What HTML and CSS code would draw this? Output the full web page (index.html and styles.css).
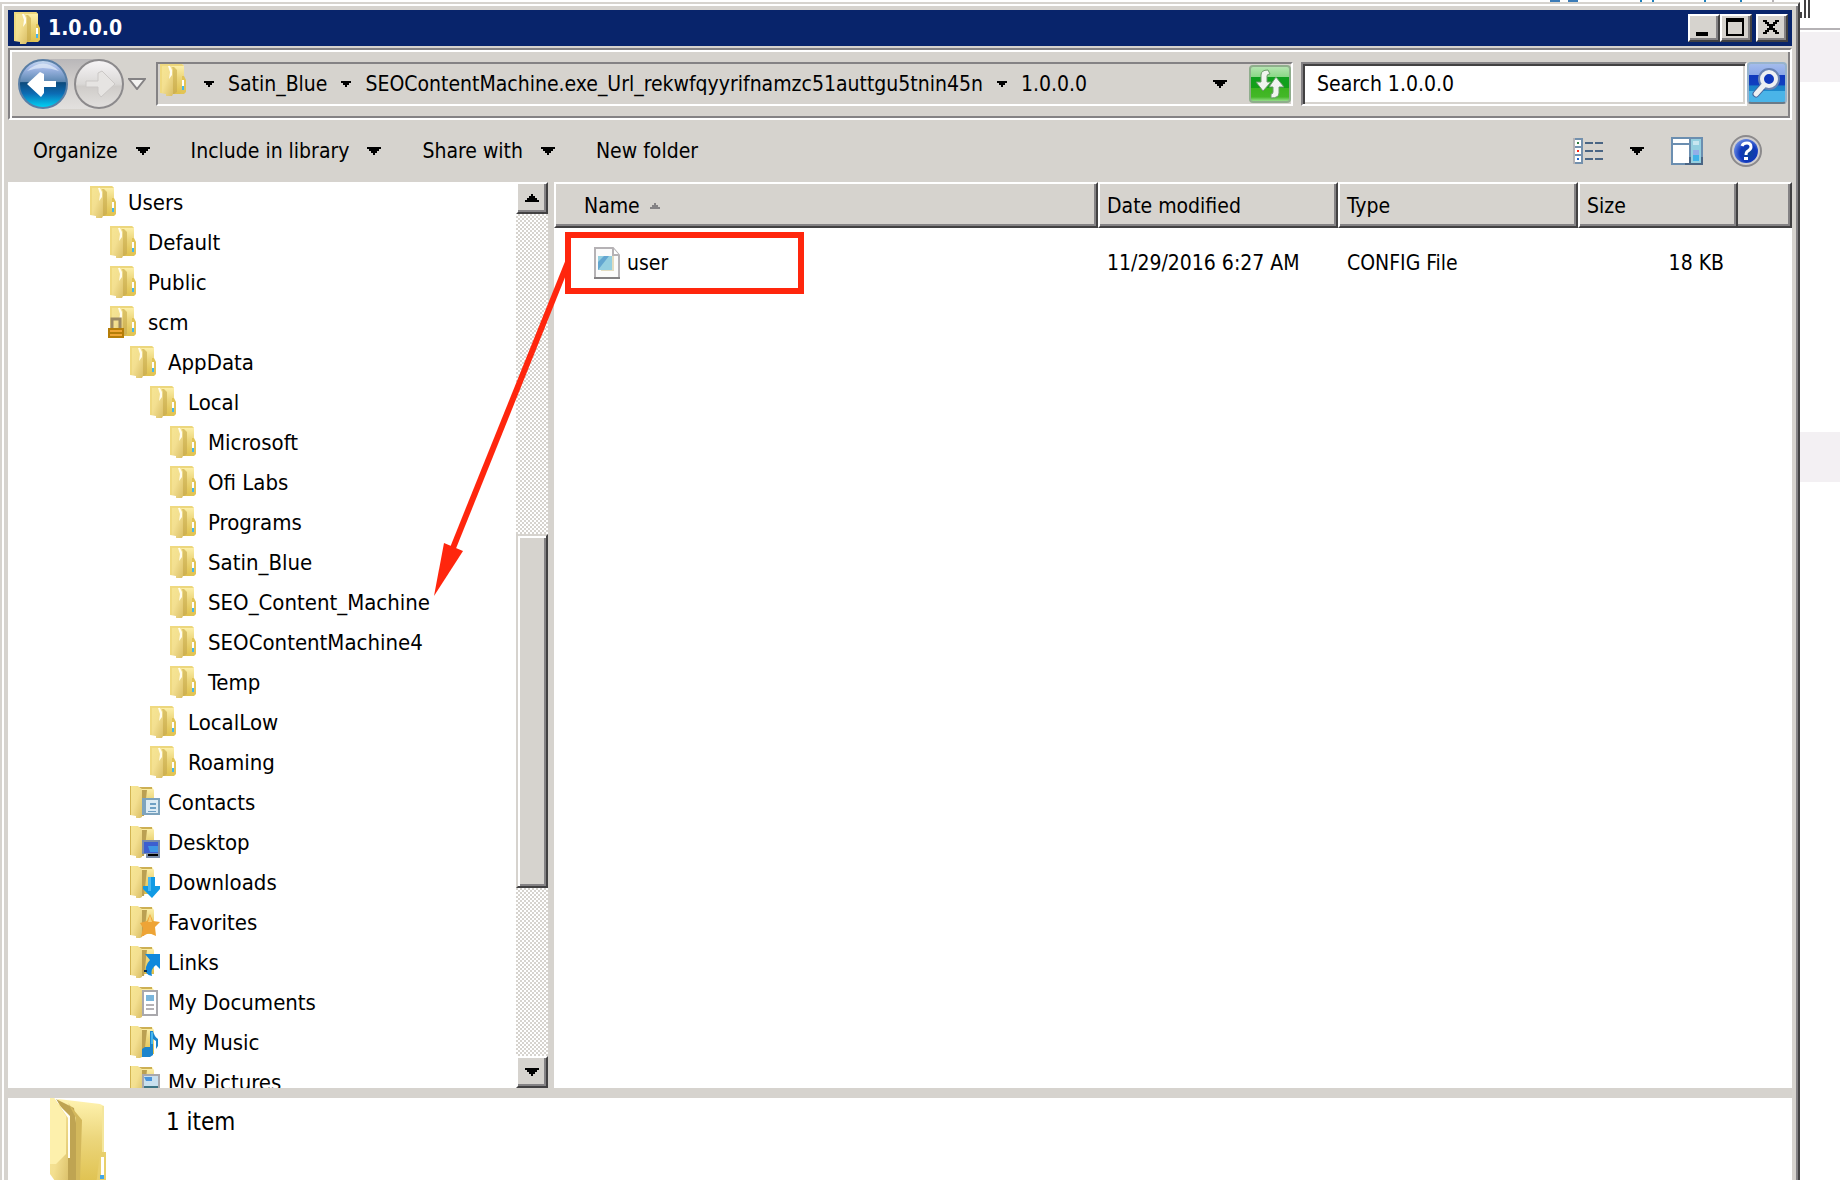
FILE: index.html
```
<!DOCTYPE html>
<html lang="en">
<head>
    <meta charset="UTF-8">
    <title>1.0.0.0</title>
    <link rel="stylesheet" href="styles.css">
</head>
<body>
    <!-- shared icon shapes -->
    <svg class="defs" width="0" height="0" aria-hidden="true">
        <defs>
            <linearGradient id="g-front" x1="0" y1="0" x2="1" y2="1">
                <stop offset="0" stop-color="#f7e794"/>
                <stop offset=".5" stop-color="#f3df90"/>
                <stop offset="1" stop-color="#d9be66"/>
            </linearGradient>
            <linearGradient id="g-back" x1="0" y1="0" x2="0" y2="1">
                <stop offset="0" stop-color="#fff3b0"/>
                <stop offset=".45" stop-color="#ecd67c"/>
                <stop offset="1" stop-color="#dec04c"/>
            </linearGradient>
            <linearGradient id="g-fold" x1="0" y1="0" x2="0" y2="1">
                <stop offset="0" stop-color="#dcc468"/>
                <stop offset="1" stop-color="#ceb050"/>
            </linearGradient>
            <linearGradient id="g-blue" x1="0" y1="0" x2="0" y2="1">
                <stop offset="0" stop-color="#c6dbef"/>
                <stop offset=".16" stop-color="#a5bae8"/>
                <stop offset=".46" stop-color="#5a86b0"/>
                <stop offset=".47" stop-color="#0c4a7c"/>
                <stop offset=".7" stop-color="#0c6cb4"/>
                <stop offset="1" stop-color="#00d8f8"/>
            </linearGradient>
            <linearGradient id="g-gray" x1="0" y1="0" x2="0" y2="1">
                <stop offset="0" stop-color="#f7f5f7"/>
                <stop offset=".5" stop-color="#dad8d6"/>
                <stop offset=".55" stop-color="#cfccc9"/>
                <stop offset="1" stop-color="#e2e0de"/>
            </linearGradient>
            <radialGradient id="g-help" cx=".6" cy=".6" r=".7">
                <stop offset="0" stop-color="#0c4494"/>
                <stop offset=".5" stop-color="#1038bc"/>
                <stop offset="1" stop-color="#7c9cec"/>
            </radialGradient>
        </defs>
        <symbol id="folder" viewBox="0 0 26 32">
            <path d="M8 0H22L24 2V28L22 30H11Z" fill="url(#g-back)"/>
            <path d="M8 0H22L24 2H8Z" fill="#ecd67c"/>
            <path d="M11 3H14L17 6V28L14 30H11Z" fill="url(#g-fold)"/>
            <path d="M0 0H8L12 3L13 6V30L12 32H6V30L0 29Z" fill="url(#g-front)"/>
            <path d="M0 0H8L10 2H2V29H0Z" fill="#efd980"/>
            <path d="M8 2H10L12 6V11L9 15L10 8Z" fill="#fffdf0"/>
            <path d="M22 12H24L26 16V28L24 30H20L22 26Z" fill="#e2c456"/>
            <path d="M22 16H24V22H22Z" fill="#fff"/>
            <path d="M22 22H24V26H22Z" fill="#42b6ee"/>
        </symbol>
        <symbol id="folder-special" viewBox="0 0 30 32">
            <path d="M10 1H22L24 4V28H10Z" fill="url(#g-back)"/>
            <path d="M12 3H22V1H8Z" fill="#cdb054"/>
            <path d="M11 4H17L14 30H11Z" fill="#bba052"/>
            <path d="M0 0H8L12 4V31L10 32H6V30L0 29Z" fill="url(#g-front)"/>
            <path d="M0 0H1V29H0Z" fill="#d2b452"/>
        </symbol>
        <symbol id="down" viewBox="0 0 14 8">
            <path d="M0 0H14V2H12V4H10V6H8V8H6V6H4V4H2V2H0Z"/>
        </symbol>
        <symbol id="down-small" viewBox="0 0 10 6">
            <path d="M0 0H10V2H8V4H6V6H4V4H2V2H0Z"/>
        </symbol>
    </svg>

    <div class="window">
        <header class="titlebar">
            <svg class="folder" width="26" height="32"><use href="#folder"/></svg>
            <h1>1.0.0.0</h1>
            <div class="window-buttons">
                <button class="bevel" aria-label="Minimize"><svg width="20" height="18"><path d="M3 14h12v4H3z"/></svg></button>
                <button class="bevel" aria-label="Maximize"><svg width="20" height="18"><path d="M1 0h18v18H1zM3 4v12h14V4z" fill-rule="evenodd"/></svg></button>
                <button class="bevel" aria-label="Close"><svg width="20" height="18"><path d="M2 2h4v2h2v2h4V4h2V2h4v2h-2v2h-2v2h-2v2h2v2h2v2h2v2h-4v-2h-2v-2H8v2H6v2H2v-2h2v-2h2v-2h2V8H6V6H4V4H2z"/></svg></button>
            </div>
        </header>

        <div class="navbar">
            <div class="history">
                <button aria-label="Back">
                    <svg width="50" height="50" viewBox="0 0 50 50">
                        <circle cx="25" cy="25" r="24" fill="url(#g-blue)" stroke="#5a7fa6" stroke-width="2"/>
                        <path d="M9 12Q25-3 41 12Q25 6 9 12Z" fill="#e2ecf8" opacity=".7"/>
                        <path d="M9 25L22 13L26 15V22H38V28H26V34L23 38Z" fill="#fff"/>
                    </svg>
                </button>
                <button aria-label="Forward">
                    <svg width="50" height="50" viewBox="0 0 50 50">
                        <circle cx="25" cy="25" r="24" fill="url(#g-gray)" stroke="#8c8a8c" stroke-width="2"/>
                        <path d="M41 25L28 12L24 14V22H12V28H24V34L27 38Z" fill="#e6e4e2" stroke="#cbc8c6"/>
                    </svg>
                </button>
            </div>
            <button class="recent" aria-label="Recent pages">
                <svg width="18" height="12" viewBox="0 0 18 12"><path d="M1 1H17L9 11Z" fill="#f3f2f0" stroke="#848284" stroke-width="2"/></svg>
            </button>
            <nav class="address" aria-label="Address">
                <svg class="folder" width="26" height="32"><use href="#folder"/></svg>
                <button class="crumb-arrow" aria-label="Root"><svg width="10" height="6"><use href="#down-small"/></svg></button>
                <button>Satin_Blue</button>
                <button class="crumb-arrow" aria-label="Show Satin_Blue"><svg width="10" height="6"><use href="#down-small"/></svg></button>
                <button>SEOContentMachine.exe_Url_rekwfqyyrifnamzc51auttgu5tnin45n</button>
                <button class="crumb-arrow" aria-label="Show folder"><svg width="10" height="6"><use href="#down-small"/></svg></button>
                <button>1.0.0.0</button>
                <button class="history-arrow" aria-label="Previous locations"><svg width="14" height="8"><use href="#down"/></svg></button>
                <button class="refresh" aria-label="Refresh">
                    <svg width="30" height="36" viewBox="0 0 30 36">
                        <path d="M13 4Q6 4 6 9V16H1L8 25L16 16H12V10Q12 8 15 8Z" fill="#f0f4f0" stroke="#6a9a6a"/>
                        <path d="M16 32Q24 32 24 27V21H29L21 11L14 21H18V26Q18 28 16 28Z" fill="#f0f4f0" stroke="#6a9a6a"/>
                    </svg>
                </button>
            </nav>
            <form class="search">
                <input type="text" aria-label="Search" value="Search 1.0.0.0">
                <button type="button" aria-label="Start search">
                    <svg width="36" height="36" viewBox="0 0 36 36">
                        <path d="M7 29L15 20" stroke="#45659c" stroke-width="7" stroke-linecap="round"/>
                        <circle cx="20" cy="14" r="8" fill="#1038bc" stroke="#6a84b4" stroke-width="6"/>
                        <path d="M7 29L15 20" stroke="#eef0f2" stroke-width="5" stroke-linecap="round"/>
                        <circle cx="20" cy="14" r="7" fill="#1038bc" stroke="#eef0f2" stroke-width="4"/>
                    </svg>
                </button>
            </form>
        </div>

        <div class="toolbar">
            <button>Organize <svg width="14" height="8"><use href="#down"/></svg></button>
            <button>Include in library <svg width="14" height="8"><use href="#down"/></svg></button>
            <button>Share with <svg width="14" height="8"><use href="#down"/></svg></button>
            <button>New folder</button>
            <div class="view-buttons">
                <button aria-label="Change your view">
                    <svg width="30" height="26" viewBox="0 0 30 26" shape-rendering="crispEdges">
                        <path d="M0 0H10V26H0Z" fill="#7390ad"/>
                        <path d="M0 0H2V26H0Z" fill="#b5b2b5"/>
                        <path d="M2 2H8V8H2ZM2 10H8V16H2ZM2 18H8V24H2Z" fill="#fff"/>
                        <path d="M4 4h2v2H4z" fill="#2c7c3c"/>
                        <path d="M4 12h2v2H4z" fill="#ff2010"/>
                        <path d="M4 20h2v2H4z" fill="#2060c8"/>
                        <path d="M12 4h8v2h-8zM22 4h8v2h-8zM12 12h8v2h-8zM22 12h8v2h-8zM12 20h8v2h-8zM22 20h8v2h-8z" fill="#4a6584"/>
                    </svg>
                </button>
                <button aria-label="More views"><svg width="14" height="8"><use href="#down"/></svg></button>
                <button aria-label="Show the preview pane">
                    <svg width="32" height="28" viewBox="0 0 32 28" shape-rendering="crispEdges">
                        <path d="M0 0H32V28H0Z" fill="#6b8eb0"/>
                        <path d="M18 20H32V28H14V26H18Z" fill="#4a6584"/>
                        <path d="M2 2H18V6H2ZM2 8H18V26H2Z" fill="#fff"/>
                        <path d="M20 2H30V26H20Z" fill="#94cfe0"/>
                        <path d="M22 4H28V8H22Z" fill="#c8e6f0"/>
                        <path d="M22 13H28V18H22Z" fill="#94aee8"/>
                        <path d="M22 18H28V24H22Z" fill="#42b2e8"/>
                    </svg>
                </button>
                <button aria-label="Get help">
                    <svg width="32" height="32" viewBox="0 0 32 32">
                        <circle cx="16" cy="16" r="15" fill="#d0ced0" stroke="#8c8a8c" stroke-width="2"/>
                        <circle cx="16" cy="16" r="12" fill="url(#g-help)"/>
                        <path d="M12 11Q13 8 17 8Q21 8 21 12Q21 14 18 16Q16 17 16 20" fill="none" stroke="#fff" stroke-width="3"/>
                        <path d="M14 22h4v3h-4z" fill="#fff"/>
                    </svg>
                </button>
            </div>
        </div>

        <div class="panes">
            <ul class="tree">
                <li class="level-0"><svg class="folder"><use href="#folder"/></svg>Users</li>
                <li class="level-1"><svg class="folder"><use href="#folder"/></svg>Default</li>
                <li class="level-1"><svg class="folder"><use href="#folder"/></svg>Public</li>
                <li class="level-1"><svg class="folder" viewBox="0 0 26 32"><use href="#folder" width="26" height="32"/><path d="M2 22V13H10V22" fill="none" stroke="#9c8a64" stroke-width="3"/><path d="M-2 22H14V32H-2Z" fill="#b57d08"/><path d="M0 24H12V26H0ZM0 28H12V30H0Z" fill="#f0a634"/></svg>scm</li>
                <li class="level-2"><svg class="folder"><use href="#folder"/></svg>AppData</li>
                <li class="level-3"><svg class="folder"><use href="#folder"/></svg>Local</li>
                <li class="level-4"><svg class="folder"><use href="#folder"/></svg>Microsoft</li>
                <li class="level-4"><svg class="folder"><use href="#folder"/></svg>Ofi Labs</li>
                <li class="level-4"><svg class="folder"><use href="#folder"/></svg>Programs</li>
                <li class="level-4"><svg class="folder"><use href="#folder"/></svg>Satin_Blue</li>
                <li class="level-4"><svg class="folder"><use href="#folder"/></svg>SEO_Content_Machine</li>
                <li class="level-4"><svg class="folder"><use href="#folder"/></svg>SEOContentMachine4</li>
                <li class="level-4"><svg class="folder"><use href="#folder"/></svg>Temp</li>
                <li class="level-3"><svg class="folder"><use href="#folder"/></svg>LocalLow</li>
                <li class="level-3"><svg class="folder"><use href="#folder"/></svg>Roaming</li>
                <li class="level-2"><svg class="folder" viewBox="0 0 26 32"><use href="#folder-special" width="30" height="32"/><path d="M12 12H30V29H12Z" fill="#7da3bd"/><path d="M16 14H28V27H16Z" fill="#dcebf4"/><path d="M20 17h6v2h-6zM20 21h6v2h-6zM18 25h8v1h-8z" fill="#6ea0c4"/></svg>Contacts</li>
                <li class="level-2"><svg class="folder" viewBox="0 0 26 32"><use href="#folder-special" width="30" height="32"/><path d="M12 14H30V32H16V28H12Z" fill="#7a8ca8"/><path d="M14 16H28V27H14Z" fill="#3c5fd0"/><path d="M18 20H28V26H20Z" fill="#3e96e4"/><path d="M18 28H28V30H18Z" fill="#000"/></svg>Desktop</li>
                <li class="level-2"><svg class="folder" viewBox="0 0 26 32"><use href="#folder-special" width="30" height="32"/><path d="M18 11H25V20H30V23L22 32L13 23V20H18Z" fill="#109ae4"/><path d="M18 11H21V25H18Z" fill="#4ab8f0"/></svg>Downloads</li>
                <li class="level-2"><svg class="folder" viewBox="0 0 26 32"><use href="#folder-special" width="30" height="32"/><path d="M20 8L23 15L30 16L25 21L26 30L19 27L11 31L13 22L10 17L17 15Z" fill="#eea436"/><path d="M20 9L22 16H18Z" fill="#f8cf74"/></svg>Favorites</li>
                <li class="level-2"><svg class="folder" viewBox="0 0 26 32"><use href="#folder-special" width="30" height="32"/><path d="M15 8H30V23L26 19Q20 23 22 30Q14 29 16 21Q17 17 20 14Z" fill="#1088dc"/><path d="M14 24h3v2h-3z" fill="#0c3050"/></svg>Links</li>
                <li class="level-2"><svg class="folder" viewBox="0 0 26 32"><use href="#folder-special" width="30" height="32"/><path d="M12 4H28V30H12Z" fill="#a9a8ac"/><path d="M14 6H26V28H14Z" fill="#fff"/><path d="M16 9H24V15H16Z" fill="#7ab6dc"/><path d="M16 18h8v2h-8zM16 22h8v2h-8z" fill="#b5b2b5"/></svg>My Documents</li>
                <li class="level-2"><svg class="folder" viewBox="0 0 26 32"><use href="#folder-special" width="30" height="32"/><path d="M20 5H23Q24 10 28 13V20L26 23V15L23 13V29L20 31H12V23L15 21H20Z" fill="#1b84cc"/><path d="M21 6H23V18H21Z" fill="#46b6ee"/></svg>My Music</li>
                <li class="level-2"><svg class="folder" viewBox="0 0 26 32"><use href="#folder-special" width="30" height="32"/><path d="M12 8H30V30H12Z" fill="#a9a8ac"/><path d="M14 10H28V28H14Z" fill="#c9e0ee"/><path d="M14 11H22V15H16Z" fill="#4a94dc"/><path d="M14 20H28V28H14Z" fill="#3c7484"/></svg>My Pictures</li>
            </ul>
            <div class="scrollbar">
                <button class="bevel" aria-label="Scroll up"><svg width="14" height="8"><path d="M6 0h2v2h2v2h2v2h2v2H0V6h2V4h2V2h2z"/></svg></button>
                <div class="track">
                    <div class="thumb"></div>
                </div>
                <button class="bevel" aria-label="Scroll down"><svg width="14" height="8"><use href="#down"/></svg></button>
            </div>
            <table class="files">
                <thead>
                    <tr>
                        <th><button>Name <svg width="10" height="6"><path d="M4 0h2v2h2v2h2v2H0V4h2V2h2z" fill="#848284"/></svg></button></th>
                        <th class="date"><button>Date modified</button></th>
                        <th class="type"><button>Type</button></th>
                        <th class="size"><button>Size</button></th>
                        <th class="rest"></th>
                    </tr>
                </thead>
                <tbody>
                    <tr>
                        <td>
                            <div class="file">
                                <svg width="26" height="32" viewBox="0 0 26 32">
                                    <path d="M1 1H19L25 8V31H1Z" fill="#fbfbfb" stroke="#b5b2b5" stroke-width="2"/>
                                    <path d="M19 1V8H25" fill="#fff" stroke="#b5b2b5" stroke-width="2"/>
                                    <path d="M0 30H26V32H0Z" fill="#848284"/>
                                    <path d="M7 9H20V24H7Z" fill="#e3dcc0"/>
                                    <path d="M4 9H18V23H4Z" fill="#94cfe0"/>
                                    <path d="M4 23V15L10 9H15Z" fill="#63a6d0"/>
                                </svg>
                                user
                            </div>
                        </td>
                        <td>11/29/2016 6:27 AM</td>
                        <td>CONFIG File</td>
                        <td class="number">18 KB</td>
                        <td></td>
                    </tr>
                </tbody>
            </table>
        </div>

        <footer class="details">
            <svg width="58" height="90" viewBox="0 0 58 90">
                <path d="M8 1L50 6L54 8V86L48 89L18 83Z" fill="url(#g-back)"/>
                <path d="M6 1L24 10L28 40V82H18V20Z" fill="#bfa452"/>
                <path d="M18 5L32 22L30 83H26V20Z" fill="#d3b85c"/>
                <path d="M52 8H54V60H52Z" fill="#f4e69c"/>
                <path d="M50 54H56V84L50 88H46Z" fill="#e8cf6c"/>
                <path d="M51 59H54V78H51Z" fill="#fff"/>
                <path d="M50 77H54V81H50Z" fill="#42a6e8"/>
                <path d="M10 8L20 18V60H16V20Z" fill="#fffef4"/>
                <path d="M0 0H4L18 20V94L10 90L0 76Z" fill="url(#g-front)"/>
                <path d="M0 0H4L16 18V56L6 66H0Z" fill="#fdf0ac"/>
            </svg>
            <span>1 item</span>
        </footer>
    </div>

    <!-- page showing past the window's right edge -->
    <div class="behind">
        <div class="behind-top">
            <svg width="12" height="18" shape-rendering="crispEdges"><path d="M0 12h2v6H0zM4 0h2v18H4zM8 0h2v18H8z" fill="#424142"/></svg>
        </div>
        <div class="stripe"></div>
        <div class="stripe"></div>
    </div>
    <svg class="behind-text" width="230" height="2" shape-rendering="crispEdges">
        <path d="M0 0h10v2H0zM18 0h10v2H18z" fill="#3c7cb8"/>
        <path d="M90 0h2v2h-2zM102 0h2v2h-2zM154 0h2v2h-2zM190 0h2v2h-2z" fill="#1c80bc"/>
        <path d="M222 0h2v2h-2z" fill="#b5b2b5"/>
    </svg>

    <svg class="callout" width="380" height="380" viewBox="430 225 380 380">
        <rect x="568" y="235" width="233" height="56" fill="none" stroke="#ff260d" stroke-width="6"/>
        <path d="M568 262L453 548" stroke="#ff260d" stroke-width="6"/>
        <path d="M444 543L463 551L434 596Z" fill="#ff260d"/>
    </svg>
</body>
</html>
```
FILE: styles.css
```
* {
    box-sizing: border-box;
}

body {
    margin: 0;
    height: 100vh;
    overflow: hidden;
    display: flex;
    background: #fff;
    color: #000;
    font-family: "DejaVu Sans Condensed", "DejaVu Sans", Tahoma, sans-serif;
    font-size: 21px;
}

svg {
    display: block;
    flex: none;
}

button {
    font: inherit;
    color: inherit;
    background: none;
    border: none;
    padding: 0;
    display: flex;
    align-items: center;
    white-space: nowrap;
}

.defs {
    position: absolute;
}

.window {
    flex: 1;
    min-width: 0;
    margin-top: 2px;
    padding: 6px 6px 0;
    display: flex;
    flex-direction: column;
    background: #d6d3ce;
    border: 2px solid #d6d3ce;
    border-right-color: #424142;
    border-bottom: none;
    box-shadow: inset 2px 2px 0 #fff, inset -2px 0 0 #848284;
}

.bevel {
    justify-content: center;
    background: #d6d3ce;
    border: 2px solid;
    border-color: #fff #424142 #424142 #fff;
    box-shadow: inset -2px -2px 0 #848284;
}

/* title bar */
.titlebar {
    height: 36px;
    flex: none;
    display: flex;
    align-items: center;
    gap: 8px;
    padding: 0 4px 0 6px;
    background: #08246b;
    color: #fff;
}

.titlebar h1 {
    flex: 1;
    margin: 0;
    font-size: 21px;
}

.window-buttons {
    display: flex;
    color: #000;
}

.window-buttons button {
    width: 32px;
    height: 28px;
    padding: 0 2px 2px 0;
}

.window-buttons button:last-child {
    margin-left: 4px;
}

/* address and search */
.navbar {
    height: 72px;
    flex: none;
    margin-top: 2px;
    padding: 0 3px 0 8px;
    display: flex;
    align-items: center;
    border: 2px solid;
    border-color: #848284 #fff #fff #848284;
    box-shadow: inset 2px 2px 0 #fff, inset -2px -2px 0 #848284;
}

.history {
    display: flex;
    gap: 6px;
    border-radius: 26px;
    background: linear-gradient(#b9b7b9, #cfccca 40%, #e2e0de);
}

.recent {
    margin: 0 10px 0 4px;
}

.address {
    flex: 1;
    min-width: 0;
    height: 44px;
    display: flex;
    align-items: center;
    padding-left: 2px;
    border: 2px solid;
    border-color: #848284 #fff #fff #848284;
}

.address .folder {
    align-self: flex-start;
    margin-right: 4px;
}

.crumb-arrow {
    padding: 0 14px;
}

.history-arrow {
    margin: 0 22px 0 auto;
}

.refresh {
    width: 42px;
    height: 38px;
    justify-content: center;
    border: 2px solid #8fae8c;
    border-radius: 4px;
    background: linear-gradient(#b4e4b0, #8cd888 28%, #10a020 29%, #14a018 62%, #3cb420 63%, #44b828 88%, #94dc88);
}

.search {
    display: flex;
    margin-left: 8px;
}

.search input {
    width: 446px;
    height: 44px;
    padding: 0 14px;
    font: inherit;
    border: 2px solid;
    border-color: #848284 #fff #fff #848284;
    box-shadow: inset 2px 2px 0 #424142, inset -2px -2px 0 #d6d3ce;
}

.search button {
    width: 40px;
    height: 42px;
    justify-content: center;
    border: 2px solid #98b4cc;
    border-bottom-color: #6a7a88;
    border-radius: 4px;
    background: linear-gradient(#a4bcec, #8ca8e8 28%, #1038bc 29%, #1040c0 56%, #1c80c8 57%, #1c88cc 70%, #4ab4e8 71%);
}

/* toolbar */
.toolbar {
    height: 62px;
    flex: none;
    display: flex;
    align-items: center;
    gap: 41px;
    padding: 0 30px 0 25px;
}

.toolbar > button {
    gap: 18px;
}

.view-buttons {
    display: flex;
    align-items: center;
    gap: 27px;
    margin-left: auto;
}

/* folder tree and file list */
.panes {
    flex: 1;
    min-height: 0;
    display: grid;
    grid-template-columns: 508px 32px 1fr;
    grid-template-rows: 100%;
    background: #fff;
}

.tree {
    margin: 0;
    padding: 0;
    list-style: none;
    overflow: hidden;
    font-size: 22px;
}

.tree li {
    height: 40px;
    display: flex;
    align-items: center;
    gap: 12px;
}

.tree .folder {
    width: 26px;
    height: 32px;
    overflow: visible;
}

.level-0 { padding-left: 82px; }
.level-1 { padding-left: 102px; }
.level-2 { padding-left: 122px; }
.level-3 { padding-left: 142px; }
.level-4 { padding-left: 162px; }

.scrollbar {
    display: flex;
    flex-direction: column;
}

.scrollbar button {
    height: 32px;
}

.track {
    flex: 1;
    padding-top: 320px;
    background: repeating-conic-gradient(#d6d3ce 0 25%, #fff 0 50%) 0 0 / 4px 4px;
}

.thumb {
    height: 354px;
    background: #d6d3ce;
    border: 2px solid;
    border-color: #d6d3ce #424142 #424142 #d6d3ce;
    box-shadow: inset 2px 2px 0 #fff, inset -2px -2px 0 #848284;
}

.files {
    align-self: stretch;
    display: block;
    border-left: 6px solid #d6d3ce;
}

.files thead,
.files tbody {
    display: table;
    width: 100%;
    table-layout: fixed;
    border-spacing: 0;
}

.files th {
    height: 46px;
    padding: 2px 7px 0;
    background: #d6d3ce;
    border: 2px solid;
    border-color: #fff #424142 #424142 #fff;
    box-shadow: inset -2px -2px 0 #848284;
    font-weight: normal;
}

.files th:first-child {
    padding-left: 28px;
}

.files th button {
    gap: 10px;
}

.files td {
    height: 68px;
    padding: 2px 9px 0;
}

.files td:first-child {
    padding-left: 40px;
}

.files th:nth-child(2),
.files th:nth-child(3),
.files td:nth-child(2),
.files td:nth-child(3) {
    width: 240px;
}

.files th:nth-child(4),
.files td:nth-child(4) {
    width: 160px;
}

.files th:nth-child(5),
.files td:nth-child(5) {
    width: 54px;
}

.files .rest {
    border-left: none;
}

.files .number {
    padding-right: 14px;
    text-align: right;
}

.file {
    display: flex;
    align-items: center;
    gap: 7px;
}

/* details pane */
.details {
    height: 92px;
    flex: none;
    display: flex;
    gap: 58px;
    padding-left: 42px;
    overflow: hidden;
    background: #fff;
    border-top: 10px solid #d6d3ce;
    font-size: 24px;
    line-height: 48px;
}

/* page behind the window */
.behind {
    width: 40px;
}

.behind-top {
    height: 30px;
    border-bottom: 2px solid #b5b2b5;
}

.stripe {
    height: 50px;
    margin-top: 2px;
    background: #f3f0f3;
}

.stripe + .stripe {
    margin-top: 350px;
}

.behind-text {
    position: absolute;
    top: 0;
    left: 1550px;
}

/* red pointer from the file to its target folder */
.callout {
    position: absolute;
    top: 225px;
    left: 430px;
    pointer-events: none;
}
```
